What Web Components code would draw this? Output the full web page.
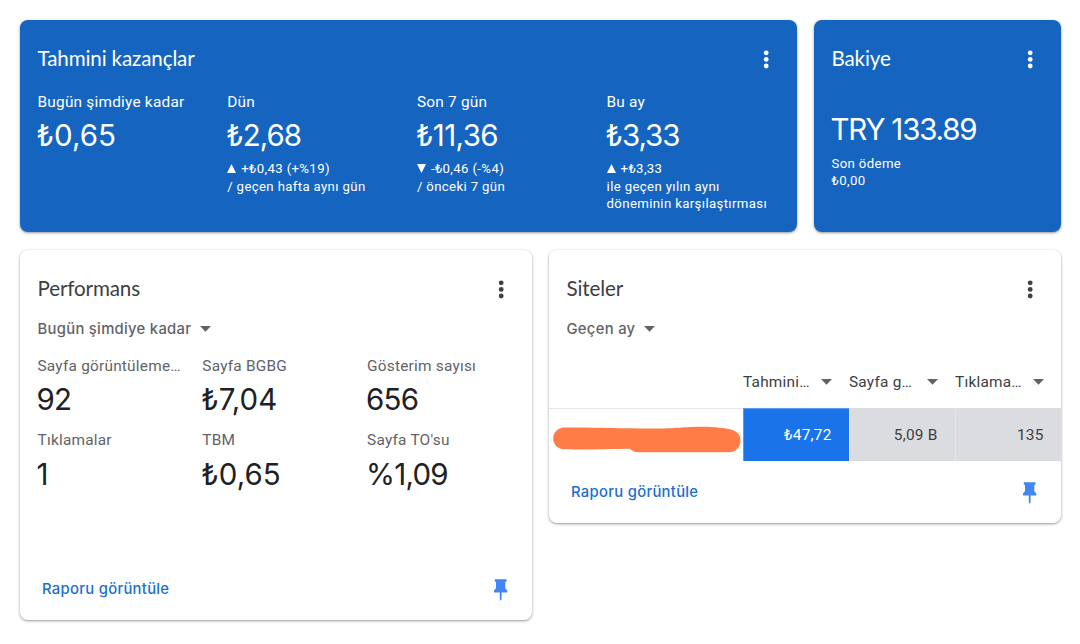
<!DOCTYPE html>
<html lang="tr">
<head>
<meta charset="utf-8">
<title>Raporlar</title>
<style>
body {
  margin: 0;
  background: #fff;
  font-family: Roboto, "Liberation Sans", sans-serif;
  color: #202124;
}
</style>
</head>
<body>
<earnings-dashboard></earnings-dashboard>

<script>
/**
 * Attaches an open shadow root with the given markup.
 */
const render = (host, html) => {
  const template = document.createElement('template')
  template.innerHTML = html
  host.attachShadow({ mode: 'open' }).appendChild(template.content.cloneNode(true))
}

/**
 * Three dots button of a card.
 */
customElements.define('more-button',
  class extends HTMLElement {
    constructor () {
      super()
      render(this, `
        <style>
        :host { display: block; width: 26.4px; height: 26.4px; }
        svg { display: block; width: 100%; height: 100%; fill: currentColor; }
        </style>
        <svg viewBox="0 0 24 24"><circle cx="12" cy="6.2" r="2.2"/><circle cx="12" cy="12.2" r="2.2"/><circle cx="12" cy="18.2" r="2.2"/></svg>
      `)
    }
  }
)

/**
 * Small triangle that marks a menu or a sort order.
 */
customElements.define('drop-arrow',
  class extends HTMLElement {
    constructor () {
      super()
      render(this, `
        <style>
        :host { display: block; flex: none; width: 11px; height: 6px; color: #5f6368; }
        svg { display: block; fill: currentColor; }
        </style>
        <svg width="11" height="6" viewBox="0 0 11 6"><path d="M0 0h11L5.5 5.7z"/></svg>
      `)
    }
  }
)

/**
 * Card with a title, a body slot and an optional footer.
 */
customElements.define('report-card',
  class extends HTMLElement {
    constructor () {
      super()
      render(this, `
        <style>
        :host {
          display: flex;
          flex-direction: column;
          box-sizing: border-box;
          border-radius: 8px;
          background: #fff;
          color: #3c4043;
          box-shadow: 0 1px 2px rgba(60, 64, 67, .38), 0 1px 3px 1px rgba(60, 64, 67, .13);
          overflow: hidden;
        }
        :host([primary]) { background: #1565c0; color: #fff; }
        header {
          display: flex;
          align-items: center;
          justify-content: space-between;
          height: 35px;
          padding: 22px 18px 0 17.5px;
        }
        h2 {
          margin: 0 0 4px;
          font: 400 20.6px/26px Lato, sans-serif;
          letter-spacing: -.13px;
        }
        </style>
        <header><h2>${this.getAttribute('heading')}</h2><more-button></more-button></header>
        <slot></slot>
      `)
    }
  }
)

/**
 * Label with a big number. The slot takes the comparison lines.
 */
customElements.define('metric-item',
  class extends HTMLElement {
    constructor () {
      super()
      render(this, `
        <style>
        :host { display: block; min-width: 0; }
        .label {
          font-size: 15.4px;
          line-height: 20px;
          letter-spacing: .22px;
          color: var(--label-color, #5f6368);
          white-space: nowrap;
        }
        .value {
          font: 400 29.5px/40px Inter, sans-serif;
          letter-spacing: var(--tracking, -.8px);
          margin: var(--value-gap, 3px) 0 0 -1px;
          color: var(--value-color, #202124);
          white-space: nowrap;
        }
        .note {
          margin-top: 5px;
          font-size: 13.2px;
          line-height: 17.6px;
          letter-spacing: .36px;
          white-space: nowrap;
        }
        </style>
        <div class="label">${this.getAttribute('label')}</div>
        <div class="value">${this.getAttribute('value')}</div>
        <div class="note"><slot></slot></div>
      `)
    }
  }
)

/**
 * Up or down change against the period before.
 */
customElements.define('metric-delta',
  class extends HTMLElement {
    constructor () {
      super()
      const path = this.hasAttribute('down') ? 'M0 0h9L4.5 9z' : 'M0 9h9L4.5 0z'
      render(this, `
        <style>
        :host { display: flex; align-items: center; gap: 5px; }
        svg { fill: currentColor; }
        </style>
        <svg width="9" height="9" viewBox="0 0 9 9"><path d="${path}"/></svg><span><slot></slot></span>
      `)
    }
  }
)

/**
 * Date range menu under the card title.
 */
customElements.define('range-picker',
  class extends HTMLElement {
    constructor () {
      super()
      render(this, `
        <style>
        :host {
          display: flex;
          align-items: center;
          gap: 8.5px;
          height: 20px;
          margin: 12px 17.5px 0;
          color: #5f6368;
          font: 500 14.8px/20px Inter, sans-serif;
          letter-spacing: .3px;
        }
        </style>
        <span><slot></slot></span><drop-arrow></drop-arrow>
      `)
    }
  }
)

/**
 * Footer with the report link and the pin.
 */
customElements.define('card-footer',
  class extends HTMLElement {
    constructor () {
      super()
      render(this, `
        <style>
        :host {
          display: flex;
          align-items: center;
          justify-content: space-between;
          height: 62px;
          margin-top: auto;
          padding: 0 18px 0 22px;
        }
        a {
          color: #1a6fd0;
          font: 500 14.8px/20px Inter, sans-serif;
          letter-spacing: .3px;
        }
        svg { display: block; fill: #4285f4; }
        </style>
        <a>Raporu görüntüle</a>
        <svg width="27" height="27" viewBox="0 0 27 27"><path d="M7.8 3.300h11.700v2.500h-1.200v6.400l2 2.200v2.200h-5.700V23.300l-.9 1.500-.9-1.500v-6.700H7v-2.200l2-2.200V5.800H7.800z"/></svg>
      `)
    }
  }
)

/**
 * Sites table with one row.
 */
customElements.define('sites-table',
  class extends HTMLElement {
    constructor () {
      super()
      render(this, `
        <style>
        :host {
          display: grid;
          grid-template-columns: 1fr 106px 106px 106px;
          grid-template-rows: 53px 53px;
          margin-top: 16px;
          font-size: 15.4px;
          letter-spacing: .22px;
        }
        .head {
          display: flex;
          align-items: center;
          justify-content: space-between;
          padding-right: 17px;
        }
        .cell {
          display: flex;
          align-items: center;
          justify-content: flex-end;
          padding-right: 17.5px;
          border-top: 1px solid #dadce0;
          background: #dadce0;
        }
        .cell + .cell { border-left: 1px solid #e4e6e9; }
        .site {
          justify-content: flex-start;
          padding: 10px 2px 0 4px;
          background: none;
          border-color: #e4e6e8;
        }
        .cell.top { background: #1a73e8; color: #fff; border-color: #5a9bef; }
        </style>
        <div></div>
        <div class="head"><span>Tahmini…</span><drop-arrow></drop-arrow></div>
        <div class="head"><span>Sayfa g…</span><drop-arrow></drop-arrow></div>
        <div class="head"><span>Tıklama…</span><drop-arrow></drop-arrow></div>
        <div class="cell site">
          <svg width="188" height="28" viewBox="0 0 188 28"><path fill="#ff7c47" d="M11 1.6C40 1.2 65 2.5 98 2.6C125 2.6 130 .8 150 .8C162 .9 172 2.2 178 3.4C184 5 187.5 9 187.5 14.5C187.5 21 183 26.3 176 26.3H86C82 26.3 79 25 77 22.7C52 22.8 30 23.8 11 23.3C4.500 23 .2 18 .2 12.4C.2 6.5 5 1.800 11 1.600z"/></svg>
        </div>
        <div class="cell top">₺47,72</div>
        <div class="cell">5,09 B</div>
        <div class="cell">135</div>
      `)
    }
  }
)

/**
 * The page: two blue cards above two white ones.
 */
customElements.define('earnings-dashboard',
  class extends HTMLElement {
    constructor () {
      super()
      render(this, `
        <style>
        :host { display: flex; flex-direction: column; gap: 18px; padding: 20px 19px 20px 20px; }
        .row { display: grid; gap: 17px; align-items: start; }
        .top { grid-template-columns: 777px 1fr; }
        .top report-card { height: 212px; --label-color: #fff; --value-color: #fff; }
        .bottom { grid-template-columns: 1fr 1fr; }
        .metrics { display: grid; padding: 0 17.5px; }
        .earnings {
          grid-template-columns: repeat(4, 189.7px);
          margin-top: 15px;
        }
        .performance {
          grid-template-columns: repeat(3, 144px);
          column-gap: 20.8px;
          grid-auto-rows: 74.3px;
          margin-top: 17px;
        }
        .balance {
          padding: 32px 17.5px 0;
          font-size: 13.2px;
          line-height: 17.3px;
          letter-spacing: .36px;
        }
        .amount {
          margin: 0 0 6px -1px;
          font: 400 29.5px/40px Inter, sans-serif;
          letter-spacing: -1.2px;
        }
        .tall { height: 370px; }
        .sites { height: 273px; }
        </style>
        <div class="row top">
          <report-card primary heading="Tahmini kazançlar">
            <div class="metrics earnings">
              <metric-item label="Bugün şimdiye kadar" value="₺0,65" style="--tracking: 0px"></metric-item>
              <metric-item label="Dün" value="₺2,68" style="--tracking: -1px">
                <metric-delta>+₺0,43 (+%19)</metric-delta>
                <div>/ geçen hafta aynı gün</div>
              </metric-item>
              <metric-item label="Son 7 gün" value="₺11,36" style="--tracking: -.6px">
                <metric-delta down>-₺0,46 (-%4)</metric-delta>
                <div>/ önceki 7 gün</div>
              </metric-item>
              <metric-item label="Bu ay" value="₺3,33" style="--tracking: -1.1px">
                <metric-delta>+₺3,33</metric-delta>
                <div>ile geçen yılın aynı<br>döneminin karşılaştırması</div>
              </metric-item>
            </div>
          </report-card>
          <report-card primary heading="Bakiye">
            <div class="balance">
              <div class="amount">TRY 133.89</div>
              <div>Son ödeme</div>
              <div>₺0,00</div>
            </div>
          </report-card>
        </div>
        <div class="row bottom">
          <report-card class="tall" heading="Performans">
            <range-picker>Bugün şimdiye kadar</range-picker>
            <div class="metrics performance">
              <metric-item label="Sayfa görüntüleme…" value="92"></metric-item>
              <metric-item label="Sayfa BGBG" value="₺7,04" style="--tracking: 0px"></metric-item>
              <metric-item label="Gösterim sayısı" value="656"></metric-item>
              <metric-item label="Tıklamalar" value="1" style="--value-gap: 4px"></metric-item>
              <metric-item label="TBM" value="₺0,65" style="--value-gap: 4px; --tracking: 0px"></metric-item>
              <metric-item label="Sayfa TO'su" value="%1,09" style="--value-gap: 4px"></metric-item>
            </div>
            <card-footer></card-footer>
          </report-card>
          <report-card class="sites" heading="Siteler">
            <range-picker>Geçen ay</range-picker>
            <sites-table></sites-table>
            <card-footer></card-footer>
          </report-card>
        </div>
      `)
    }
  }
)
</script>
</body>
</html>
